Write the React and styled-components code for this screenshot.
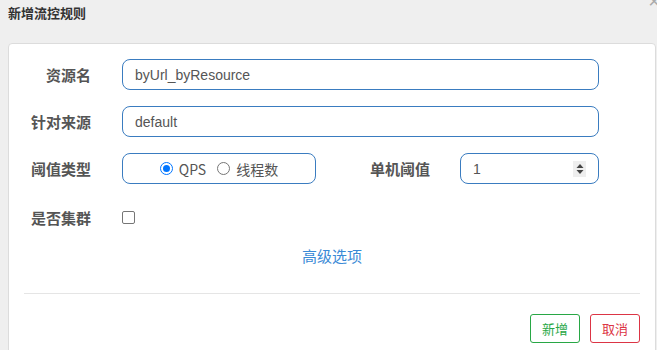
import styled, { createGlobalStyle } from "styled-components";

const GlobalStyle = createGlobalStyle`
  html, body {
    margin: 0;
    padding: 0;
    background: #efefef;
    font-family: "Liberation Sans", "Noto Sans CJK SC", sans-serif;
  }
`;

export default function App() {
  return (
    <Page>
      <GlobalStyle />
      <Header>
        <Title>新增流控规则</Title>
        <Close>×</Close>
      </Header>
      <Card>
        <Form>
          <Row>
            <Label>资源名</Label>
            <TextInput $width={477}>byUrl_byResource</TextInput>
          </Row>
          <Row>
            <Label>针对来源</Label>
            <TextInput $width={477}>default</TextInput>
          </Row>
          <Row>
            <Label>阈值类型</Label>
            <RadioBox>
              <RadioItem>
                <Radio $checked />
                QPS
              </RadioItem>
              <RadioItem>
                <Radio />
                线程数
              </RadioItem>
            </RadioBox>
            <Label $width={114}>单机阈值</Label>
            <TextInput $width={139} $gap={30}>
              1
              <Spinner>
                <svg width="8" height="12" viewBox="0 0 8 12">
                  <path d="M4 1 L7.5 5 H0.5 Z" fill="#444" />
                  <path d="M4 11 L7.5 7 H0.5 Z" fill="#444" />
                </svg>
              </Spinner>
            </TextInput>
          </Row>
          <Row $short>
            <Label>是否集群</Label>
            <Checkbox />
          </Row>
          <Advanced>高级选项</Advanced>
        </Form>
        <Divider />
        <Footer>
          <Button $color="#28a745">新增</Button>
          <Button $color="#dc3545">取消</Button>
        </Footer>
      </Card>
    </Page>
  );
}

const Page = styled.div`
  width: 657px;
  height: 350px;
  overflow: hidden;
  position: relative;
  padding: 0 1px 0 8px;
  box-sizing: border-box;
`;

const Header = styled.div`
  height: 43px;
  display: flex;
  align-items: flex-start;
`;

const Title = styled.h4`
  margin: 5px 0 0;
  font-size: 13px;
  line-height: 16px;
  font-weight: bold;
  color: #333;
  font-family: "Noto Sans CJK SC", sans-serif;
`;

const Close = styled.span`
  position: absolute;
  top: -9px;
  right: -3px;
  font-size: 20px;
  color: #aaa;
  line-height: 20px;
`;

const Card = styled.div`
  background: #fff;
  border: 1px solid #dcdcdc;
  border-radius: 4px;
  height: 330px;
`;

const Form = styled.div`
  padding: 15px 0 0 15px;
  display: flex;
  flex-direction: column;
  gap: 16px;
`;

const Row = styled.div`
  display: flex;
  align-items: center;
  height: ${(p) => (p.$short ? "16px" : "31px")};
  margin-top: ${(p) => (p.$short ? "9px" : "0")};
`;

const Label = styled.label`
  width: ${(p) => p.$width || 67}px;
  text-align: right;
  font-size: 15px;
  font-weight: bold;
  color: #555;
  font-family: "Noto Sans CJK SC", sans-serif;
  flex-shrink: 0;
  margin-right: 31px;
`;

const TextInput = styled.div`
  width: ${(p) => p.$width}px;
  height: 31px;
  box-sizing: border-box;
  border: 1px solid #3a7cc0;
  border-radius: 8px;
  padding: 0 12px;
  display: flex;
  align-items: center;
  justify-content: space-between;
  font-size: 14px;
  color: #555;
  margin-left: ${(p) => (p.$gap ? p.$gap - 31 : 0)}px;
`;

const Spinner = styled.span`
  width: 13px;
  height: 16px;
  background: #eee;
  display: flex;
  align-items: center;
  justify-content: center;
`;

const RadioBox = styled.div`
  width: 194px;
  height: 31px;
  box-sizing: border-box;
  border: 1px solid #3a7cc0;
  border-radius: 8px;
  display: flex;
  align-items: center;
  justify-content: center;
  gap: 11px;
  font-size: 14px;
  color: #555;
  flex-shrink: 0;
`;

const RadioItem = styled.span`
  display: flex;
  align-items: center;
  gap: 6px;
  font-family: "Noto Sans CJK SC", sans-serif;
`;

const Radio = styled.span`
  width: 13px;
  height: 13px;
  box-sizing: border-box;
  border-radius: 50%;
  border: 1px solid ${(p) => (p.$checked ? "#0075ff" : "#767676")};
  position: relative;
  &::after {
    content: "";
    display: ${(p) => (p.$checked ? "block" : "none")};
    position: absolute;
    inset: 2px;
    border-radius: 50%;
    background: #0075ff;
  }
`;

const Checkbox = styled.span`
  width: 13px;
  height: 13px;
  box-sizing: border-box;
  border: 1px solid #767676;
  border-radius: 2px;
`;

const Advanced = styled.div`
  text-align: center;
  font-size: 15px;
  line-height: 20px;
  color: #3a8ad6;
  margin: 5px 15px 0 0;
  font-family: "Noto Sans CJK SC", sans-serif;
`;

const Divider = styled.hr`
  border: none;
  border-top: 1px solid #e5e5e5;
  margin: 27px 15px 0;
`;

const Footer = styled.div`
  display: flex;
  justify-content: flex-end;
  gap: 10px;
  padding: 20px 15px 0;
`;

const Button = styled.button`
  width: 50px;
  height: 29px;
  background: #fff;
  border: 1px solid ${(p) => p.$color};
  color: ${(p) => p.$color};
  border-radius: 3px;
  font-size: 13px;
  font-family: "Noto Sans CJK SC", sans-serif;
  padding: 0;
`;
